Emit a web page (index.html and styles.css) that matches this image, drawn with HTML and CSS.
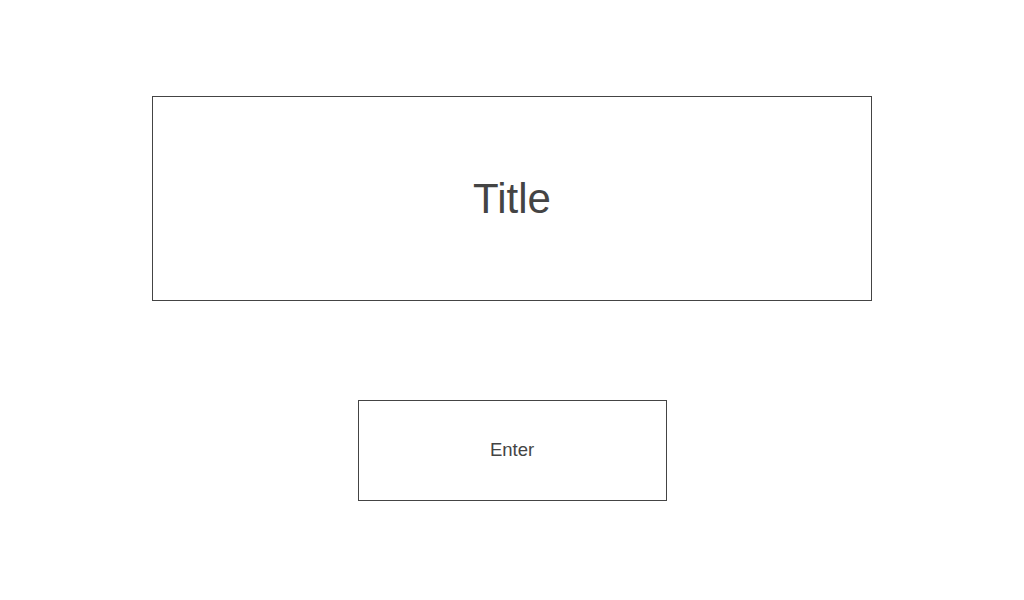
FILE: index.html
```html
<!DOCTYPE html>
<html>
<head>
<meta charset="utf-8">
<link rel="stylesheet" href="styles.css">
</head>
<body>
<main class="page">
  <div class="title-box"><h1 class="title">Title</h1></div>
  <button class="enter">Enter</button>
</main>
</body>
</html>
```
FILE: styles.css
```css
html, body { margin: 0; padding: 0; background: #fff; }
body { font-family: "Liberation Sans", Arial, sans-serif; color: #444; }
.page {
  display: flex;
  flex-direction: column;
  align-items: center;
  padding-top: 96px;
  gap: 99px;
}
.title-box {
  box-sizing: border-box;
  width: 720px;
  height: 205px;
  border: 1px solid #444;
  display: flex;
  align-items: center;
  justify-content: center;
}
.title {
  margin: 0;
  font-size: 42px;
  font-weight: normal;
  color: #444;
}
.enter {
  box-sizing: border-box;
  width: 309px;
  height: 101px;
  border: 1px solid #444;
  background: #fff;
  font-family: "Liberation Sans", Arial, sans-serif;
  font-size: 18.5px;
  color: #444;
  padding: 0 0 2px 0;
}
```
